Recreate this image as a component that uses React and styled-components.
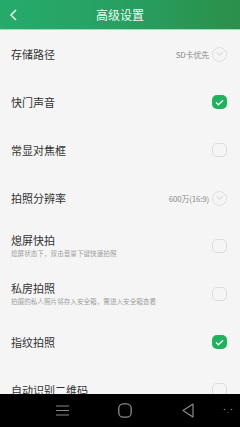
import React from 'react';
import styled, { createGlobalStyle } from 'styled-components';

const GlobalStyle = createGlobalStyle`
  html, body {
    margin: 0;
    padding: 0;
    background: #f5f5f5;
  }
  * {
    box-sizing: border-box;
  }
`;

const Screen = styled.div`
  width: 240px;
  height: 427px;
  display: flex;
  flex-direction: column;
  overflow: hidden;
  background: #f5f5f5;
  font-family: 'Noto Sans CJK SC', 'Noto Sans', sans-serif;
`;

const Header = styled.div`
  height: 30px;
  flex: none;
  display: grid;
  grid-template-columns: 30px 1fr 30px;
  align-items: center;
  background: linear-gradient(90deg, #26ab6c 0%, #27a062 50%, #2c8f4a 100%);
  border-bottom: 1px solid #9fdcbc;
`;

const BackButton = styled.div`
  display: flex;
  align-items: center;
  justify-content: center;
  padding-right: 3px;
`;

const Title = styled.div`
  text-align: center;
  color: #eefaf2;
  font-size: 12px;
  line-height: 1;
`;

const List = styled.div`
  flex: 1;
  overflow: hidden;
`;

const Row = styled.div`
  height: 48px;
  display: flex;
  align-items: center;
  padding: 0 13px 0 11px;
`;

const Labels = styled.div`
  flex: 1;
  display: flex;
  flex-direction: column;
  gap: 4px;
  min-width: 0;
`;

const Label = styled.div`
  font-size: 11px;
  line-height: 1;
  color: #333;
`;

const Hint = styled.div`
  font-size: 6.6px;
  line-height: 1;
  color: #a0a0a0;
  white-space: nowrap;
`;

const Value = styled.div`
  font-size: 8px;
  color: #8a8a8a;
  margin-right: 3px;
  letter-spacing: -0.2px;
`;

const Circle = styled.div`
  width: 15px;
  height: 15px;
  border-radius: 50%;
  border: 1px solid #dedede;
  display: flex;
  align-items: center;
  justify-content: center;
`;

const Check = styled.div`
  width: 15px;
  height: 14px;
  border-radius: 5px;
  display: flex;
  align-items: center;
  justify-content: center;
  background: ${p => (p.on ? '#1db25c' : 'transparent')};
  border: ${p => (p.on ? 'none' : '1px solid #dcdcdc')};
`;

const NavBar = styled.div`
  height: 33px;
  flex: none;
  background: #000;
  display: grid;
  grid-template-columns: 52px 20px 43px 20px 43px 20px 18px 1fr;
  align-items: center;
`;

const NavSlot = styled.div`
  grid-column: ${p => p.col};
  display: flex;
  align-items: center;
  justify-content: center;
`;

const Chevron = () => (
  <svg width="9" height="12" viewBox="0 0 9 12">
    <path d="M7 1 L2 6 L7 11" fill="none" stroke="#dff5e8" strokeWidth="1.6" />
  </svg>
);

const Tick = () => (
  <svg width="9" height="7" viewBox="0 0 9 7">
    <path d="M1 3.6 L3.4 5.8 L8 1.2" fill="none" stroke="#fff" strokeWidth="1.3" />
  </svg>
);

const Down = () => (
  <svg width="7" height="4" viewBox="0 0 7 4">
    <path d="M0.5 0.5 L3.5 3.3 L6.5 0.5" fill="none" stroke="#c8c8c8" strokeWidth="0.9" />
  </svg>
);

const Select = ({ value }) => (
  <>
    <Value>{value}</Value>
    <Circle>
      <Down />
    </Circle>
  </>
);

const items = [
  { label: '存储路径', select: 'SD卡优先' },
  { label: '快门声音', on: true },
  { label: '常显对焦框', on: false },
  { label: '拍照分辨率', select: '600万(16:9)' },
  { label: '熄屏快拍', hint: '熄屏状态下，双击音量下键快速拍照', on: false },
  { label: '私房拍照', hint: '拍摄的私人照片将存入安全箱，需进入安全箱查看', on: false },
  { label: '指纹拍照', on: true },
  { label: '自动识别二维码', on: false },
];

const App = () => (
  <Screen>
    <GlobalStyle />
    <Header>
      <BackButton>
        <Chevron />
      </BackButton>
      <Title>高级设置</Title>
    </Header>
    <List>
      {items.map(item => (
        <Row key={item.label}>
          <Labels>
            <Label>{item.label}</Label>
            {item.hint && <Hint>{item.hint}</Hint>}
          </Labels>
          {item.select ? (
            <Select value={item.select} />
          ) : (
            <Check on={item.on}>{item.on && <Tick />}</Check>
          )}
        </Row>
      ))}
    </List>
    <NavBar>
      <NavSlot col={2}>
        <svg width="13" height="11" viewBox="0 0 13 11">
          <path d="M0 1 H13 M0 5.5 H13 M0 10 H13" stroke="#8a8a8a" strokeWidth="1.2" />
        </svg>
      </NavSlot>
      <NavSlot col={4}>
        <svg width="14" height="15" viewBox="0 0 14 15">
          <rect x="0.8" y="0.8" width="12.4" height="13.4" rx="4.5" fill="none" stroke="#8a8a8a" strokeWidth="1.3" />
        </svg>
      </NavSlot>
      <NavSlot col={6}>
        <svg width="12" height="15" viewBox="0 0 12 15">
          <path d="M11 1 L1 7.5 L11 14 Z" fill="none" stroke="#8a8a8a" strokeWidth="1.2" strokeLinejoin="round" />
        </svg>
      </NavSlot>
      <NavSlot col={8}>
        <svg width="10" height="6" viewBox="0 0 10 6">
          <circle cx="1.5" cy="1.5" r="0.8" fill="#7a7a7a" />
          <circle cx="8.5" cy="1.5" r="0.8" fill="#7a7a7a" />
          <circle cx="5" cy="4.5" r="0.6" fill="#555" />
        </svg>
      </NavSlot>
    </NavBar>
  </Screen>
);

export default App;
